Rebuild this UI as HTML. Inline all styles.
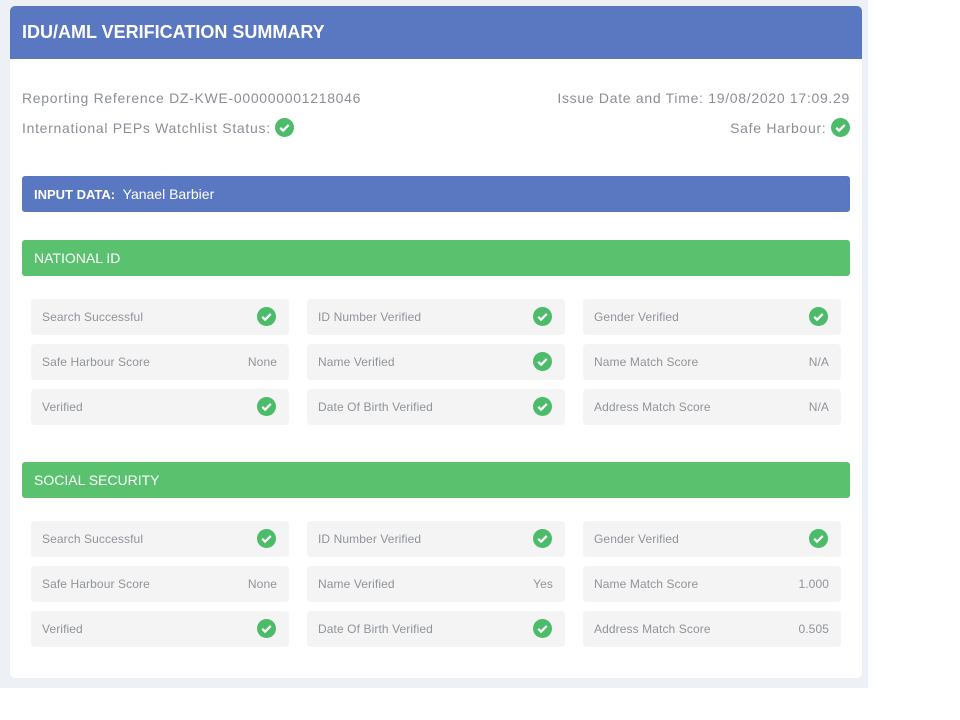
<!DOCTYPE html>
<html><head><style>
body{margin:0;width:960px;height:720px;background:#fff;font-family:"Liberation Sans",sans-serif;position:relative;overflow:hidden}
.bg{position:absolute;left:0;top:0;width:868px;height:688px;background:#edf1f6}
.card{position:absolute;left:10px;top:6px;width:852px;height:672px;background:#fff;border-radius:5px;overflow:hidden}
.hdr{position:absolute;left:0;top:0;width:852px;height:53px;background:#5a77c2;color:#fff;font-weight:bold;font-size:18px;line-height:53px;padding-left:12px;box-sizing:border-box}
.t{position:absolute;color:#8a8f96;font-size:14px;letter-spacing:0.7px}
.bar{position:absolute;left:12px;width:828px;height:36px;border-radius:3px;color:#fff;font-size:14px;line-height:36px;padding-left:12px;box-sizing:border-box}
.cell{position:absolute;width:258px;height:36px;background:#f4f4f4;border-radius:4px;font-size:12px;color:#8f949a;line-height:36px;letter-spacing:0.1px}
.cell .l{position:absolute;left:11px}
.cell .r{position:absolute;right:12px}
.ck{display:inline-block;width:19px;height:19px;vertical-align:middle;position:relative;top:-2px}
.cell .ck{position:absolute;right:13px;top:8px}
</style></head><body>
<div class="bg"></div>
<div class="card">
<div class="hdr">IDU/AML VERIFICATION SUMMARY</div>
<div class="t" style="left:12px;top:84px">Reporting Reference DZ-KWE-000000001218046</div>
<div class="t" style="right:12px;top:84px">Issue Date and Time: 19/08/2020 17:09.29</div>
<div class="t" style="left:12px;top:114px">International PEPs Watchlist Status: <svg class="ck" viewBox="0 0 20 20"><circle cx="10" cy="10" r="10" fill="#4cbb6a"/><path d="M5.5 10.3l3 3 6-6" stroke="#fff" stroke-width="2.4" fill="none"/></svg></div>
<div class="t" style="right:12px;top:114px">Safe Harbour: <svg class="ck" viewBox="0 0 20 20"><circle cx="10" cy="10" r="10" fill="#4cbb6a"/><path d="M5.5 10.3l3 3 6-6" stroke="#fff" stroke-width="2.4" fill="none"/></svg></div>
<div class="bar" style="top:170px;background:#5a77c2"><b style="font-size:13px">INPUT DATA:</b>&nbsp; Yanael Barbier</div>
<div class="bar" style="top:234px;background:#5ac26f">NATIONAL ID</div>
<div class="bar" style="top:456px;background:#5ac26f">SOCIAL SECURITY</div>
<div id="cells"></div>
</div>
<script>
var ck='<svg class="ck" viewBox="0 0 20 20"><circle cx="10" cy="10" r="10" fill="#4cbb6a"/><path d="M5.5 10.3l3 3 6-6" stroke="#fff" stroke-width="2.4" fill="none"/></svg>';
var s1=[["Search Successful",1],["ID Number Verified",1],["Gender Verified",1],["Safe Harbour Score","None"],["Name Verified",1],["Name Match Score","N/A"],["Verified",1],["Date Of Birth Verified",1],["Address Match Score","N/A"]];
var s2=[["Search Successful",1],["ID Number Verified",1],["Gender Verified",1],["Safe Harbour Score","None"],["Name Verified","Yes"],["Name Match Score","1.000"],["Verified",1],["Date Of Birth Verified",1],["Address Match Score","0.505"]];
var h='';
[[s1,293],[s2,515]].forEach(function(p){p[0].forEach(function(c,i){var x=21+(i%3)*276,y=p[1]+Math.floor(i/3)*45;
h+='<div class="cell" style="left:'+x+'px;top:'+y+'px"><span class="l">'+c[0]+'</span>'+(c[1]===1?ck:'<span class="r">'+c[1]+'</span>')+'</div>';});});
document.getElementById('cells').innerHTML=h;
</script>
</body></html>
